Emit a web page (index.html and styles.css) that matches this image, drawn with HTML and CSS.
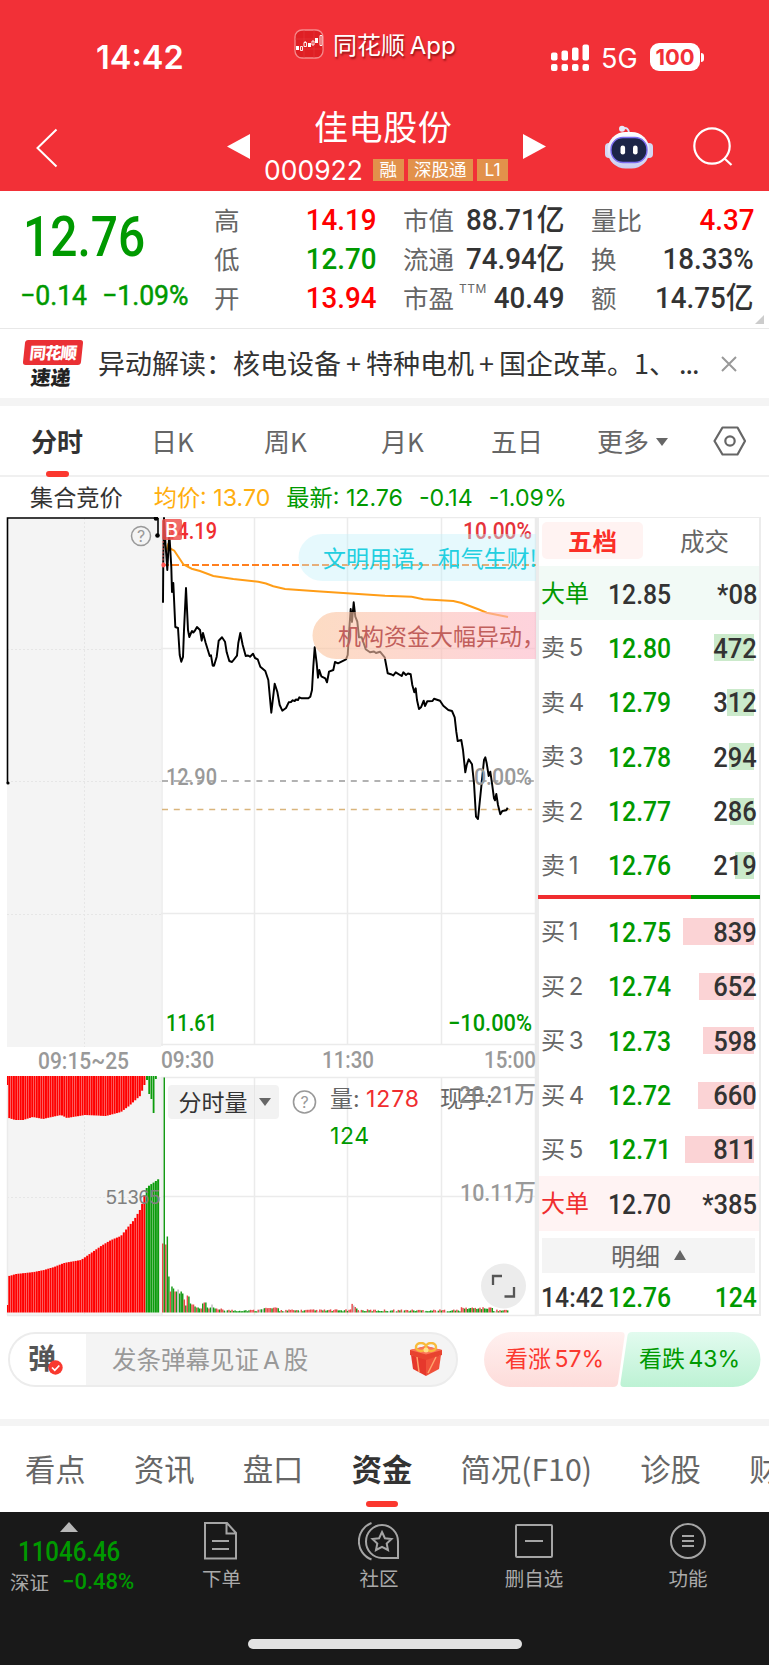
FILE: index.html
```html
<!DOCTYPE html>
<html lang="zh-CN">
<head>
<meta charset="utf-8">
<title>佳电股份 000922</title>
<link rel="stylesheet" href="styles.css">
</head>
<body>
<header class="top">
  <div class="status">
    <span class="clock">14:42</span>
    <span class="app">
      <svg width="30" height="30" viewBox="0 0 30 30"><rect x="1" y="1" width="28" height="28" rx="7" fill="#df1f24" stroke="#f58a8c" stroke-width="1.3"/><path d="M1 10H29M1 20H29M10 1V29M20 1V29" stroke="#e8393d" stroke-width=".6"/><path d="M2 17h3v4H2zM14 14h3v4h-3zM21 9h3v5h-3z" fill="#fff"/><path d="M6.500 17.500h2v4h-2zM10 13.500h2.500v4H10zM18 12h2v4h-2zM26 6.500h2v10h-2zM11.200 12v1.500" fill="none" stroke="#fff" stroke-width=".9"/></svg>
      <span>同花顺 App</span>
    </span>
    <svg class="signal" width="38" height="28" viewBox="0 0 38 28" fill="#fff"><rect x="0" y="8.500" width="6.500" height="8" rx="2"/><rect x="10.500" y="6.500" width="6.500" height="10" rx="2"/><rect x="21" y="3.500" width="6.500" height="13" rx="2"/><rect x="31.500" y="0.500" width="6.500" height="16" rx="2"/><rect x="0" y="20" width="6.500" height="7" rx="2"/><rect x="10.500" y="20" width="6.500" height="7" rx="2"/><rect x="21" y="20" width="6.500" height="7" rx="2"/><rect x="31.500" y="20" width="6.500" height="7" rx="2"/></svg>
    <span class="net">5G</span>
    <span class="battery">100</span><i class="nub"></i>
  </div>
  <nav class="titlebar">
    <svg class="back" width="22" height="40" viewBox="0 0 22 40"><path d="M20.500 1.500L1.500 20L20.500 38.500" fill="none" stroke="#fff" stroke-width="2"/></svg>
    <svg class="prev" width="23" height="25" viewBox="0 0 23 25"><path d="M0 12.500L23 0V25z" fill="#fff"/></svg>
    <div class="stock">
      <h1>佳电股份</h1>
      <div class="codes"><span class="code">000922</span><b>融</b><b>深股通</b><b>L1</b></div>
    </div>
    <svg class="next" width="23" height="25" viewBox="0 0 23 25"><path d="M23 12.500L0 0V25z" fill="#fff"/></svg>
    <svg class="robot" width="48" height="44" viewBox="0 0 48 44">
      <defs><linearGradient id="rb" x1="0" y1="0" x2="0" y2="1"><stop offset="0" stop-color="#fff"/><stop offset="1" stop-color="#c9cdf0"/></linearGradient></defs>
      <path d="M17 3.500q7-2 7 5" fill="none" stroke="#dfe1f6" stroke-width="2"/><circle cx="17" cy="3.800" r="3" fill="#e6e7f8"/>
      <rect x="0" y="18" width="8" height="15" rx="4" fill="#d4d7f2"/><rect x="40" y="18" width="8" height="15" rx="4" fill="#d4d7f2"/>
      <rect x="2.500" y="7" width="42" height="36.500" rx="18" fill="url(#rb)"/>
      <rect x="6" y="12.500" width="36" height="25" rx="12" fill="#1c2547" stroke="#7b6df0" stroke-width="1.400"/>
      <rect x="15.500" y="20.500" width="4.600" height="9" rx="2.300" fill="#fff"/><rect x="28" y="20.500" width="4.600" height="9" rx="2.300" fill="#fff"/>
    </svg>
    <svg class="search" width="40" height="40" viewBox="0 0 40 40" fill="none" stroke="#fff" stroke-width="2.200"><circle cx="19" cy="19" r="17.700"/><path d="M31 31L38.500 38"/></svg>
  </nav>
</header>

<section class="quote">
  <div class="last"><div class="din price">12.76</div><div class="chg"><span class="din">−0.14</span><span class="din">−1.09%</span></div></div>
  <div class="stats">
    <span>高</span><b class="din up">14.19</b><span>市值</span><b class="din">88.71亿</b><span>量比</span><b class="din up">4.37</b>
    <span>低</span><b class="din down">12.70</b><span>流通</span><b class="din">74.94亿</b><span>换</span><b class="din">18.33%</b>
    <span>开</span><b class="din up">13.94</b><span class="pe">市盈<sup>TTM</sup></span><b class="din">40.49</b><span>额</span><b class="din">14.75亿</b>
  </div>
  <i class="corner"></i>
</section>

<section class="news">
  <div class="flash"><span class="flash-top">同花顺</span><span class="flash-bot">速递</span></div>
  <p><span>异动解读：</span><span>核电设备<i>+</i>特种电机<i>+</i>国企改革。1、<span class="dots">...</span></span></p>
  <svg width="16" height="16" viewBox="0 0 16 16"><path d="M1 1L15 15M15 1L1 15" stroke="#999" stroke-width="2"/></svg>
</section>

<nav class="periods">
  <span class="on">分时</span><span>日K</span><span>周K</span><span>月K</span><span>五日</span><span class="more">更多<i></i></span>
  <svg width="34" height="30" viewBox="0 0 34 30" fill="none" stroke="#666" stroke-width="2.200"><path d="M9.500 1.500H24.500L32 15L24.500 28.500H9.500L1.500 15z" stroke-linejoin="round"/><circle cx="17" cy="15" r="4.700"/></svg>
</nav>

<div class="legend"><span>集合竞价</span><span class="avg">均价: 13.70</span><span class="now">最新: 12.76</span><span class="now">-0.14</span><span class="now">-1.09%</span></div>

<main class="board">
  <svg class="chart" width="537" height="800" viewBox="0 517 537 800">
    <defs>
      <linearGradient id="pk"><stop offset="0" stop-color="#fbc49c"/><stop offset="1" stop-color="#fdb5c6"/></linearGradient>
    </defs>
    <rect x="7" y="517" width="154" height="530" fill="#f4f4f4"/>
    <rect x="7" y="1077" width="154" height="238" fill="#f4f4f4"/>
    <g stroke="#e6e6e6" stroke-dasharray="2 2"><path d="M84.500 518V1047M7 649.500H161M7 781.500H161M7 914.500H161M84.500 1077V1314M7 1197.500H161"/></g>
    <g stroke="#ebebeb" stroke-width="1.500" fill="none"><path d="M162 517V1046M162 1077V1315M254.500 517V1045M347.500 517V1045M441.500 517V1045M254.500 1077V1315M347.500 1077V1315M441.500 1077V1315M161 517.500H537M161 648.500H537M161 913.500H537M161 1044.500H537M161 1077.500H537M161 1196.500H537M7 1315.500H537M7.500 1077V1315"/><path d="M536 517V1315" stroke-width="2.500"/></g>
    <g stroke-width="1.700" fill="none">
      <path d="M162 565H536" stroke="#ff7f1e" stroke-width="2" stroke-dasharray="7 3"/>
      <path d="M162 781H536" stroke="#999" stroke-dasharray="6 5.800"/>
      <path d="M162 809.500H532" stroke="#d9b57c" stroke-width="1.300" stroke-dasharray="6 5.800"/>
      <path d="M166 552L168 545L171 549L174.300 550.700L178.300 556.700L183.300 564.300L191.700 568.700L200 571L213.300 576L233.300 579L258.300 581.700L266 583.500L273.300 586.300L285 589L316.700 591.300L385 595.700L411.700 596.700L423.300 599.300L453.300 601L461.700 603L478.300 609.300L486.700 612.700L508 617" stroke="#ff9d17" stroke-width="2"/>
      <path class="trend" d="M163 602.700L163.300 560L164 518L165.500 544L167.300 570L169.300 533L171.300 567L172 592L173.300 583L175.300 627L178 628L179.700 655L181.300 661.700L183 657L184 630L186 588L188 630L189.300 637L191 633L192 631L193.300 632.500L195 630.500L197 627L200 630L201.700 640.700L203 633L205.700 643L209.700 656L211 655.300L212.700 665.700L214 665.700L216.700 656.700L218.700 640.700L222 637.300L225 641.700L226.700 652.300L229.300 661L232 662L237 655.700L238.300 643L240.300 633L242.700 645L245.700 656L248 655.500L250 656.700L253 653.700L255 658L257.700 659.300L260.300 666.700L265.300 671L268.300 680L271.300 712.700L274.700 683.700L277.300 691.700L279.700 705L282.300 710.700L286 708L288.700 702.300L291 702L292.700 700.300L294.700 701L296 699.500L298 700L299.300 697.300L301.700 698.300H308.300L310.300 696.700L312 690L313.300 666.700L314.700 647.300L316.700 663.300L318 677.700L319.300 670L321.300 676.300L325.300 678.300L327 682.300L329 671.700L333.300 670L335 662L338 663.300L346 659.300L347.700 655L349 633L350.700 609L352 622L353.700 602.300L355.300 616.700L357.300 621.700L359 637.300H361.700L365.700 649.300L370 652.300L374 651.500L376 653L380 651.700L384.700 657.300L387.700 673.300L391.700 674.500L393.300 675.500L395.700 672.300L401.700 676L403.300 672.300L406 675L408 673.500L410.700 674.300L412.300 685L414.300 692.300L415.700 688.300L417 700L419 709L421 707.300L423.700 700.700L425 706L427.300 701.300L432.500 701L434 698.700L440 700.700L443.300 705.700L448.300 710L452 711L454.700 717.300L456.300 731.700L457.700 741L461.300 740L463 750L465.300 772.300L466.700 765L468.700 759.300L472 764.300L474 783.300L476 816.700L478 819L481.300 786.700L484 760L485.300 757.300L486.700 763.300L488.700 776L490.300 771.700L492 783.300L494 798.300L495 800.300L496.300 794L498 805L500.300 814.300L502.300 811L506.300 810.300L507.700 807.700" stroke="#000" stroke-width="1.950" stroke-linejoin="round"/>
      <path d="M7.500 783V518H156M158 518V535" stroke="#000" stroke-width="1.600"/>
    </g>
    <circle cx="8" cy="783" r="1.600"/><circle cx="157.500" cy="535.500" r="2.300"/><circle cx="156" cy="518.500" r="2.300"/>
    <circle cx="141" cy="536" r="9.500" fill="none" stroke="#999" stroke-width="1.500"/><text x="141" y="542" class="q" text-anchor="middle">?</text>
    <text class="ax" x="166" y="539" fill="#f02d2f" textLength="51" lengthAdjust="spacingAndGlyphs">14.19</text>
    <rect x="162" y="519" width="20" height="21" rx="2" fill="#ef5350" opacity=".85"/><text x="165" y="537" class="bmark">B</text>
    <path d="M163 541V569" stroke="#f66" stroke-dasharray="2 1.500"/><circle cx="163.500" cy="565" r="2.200" fill="#f55"/>
    <text class="ax" x="463" y="539" fill="#e5333b" textLength="69" lengthAdjust="spacingAndGlyphs">10.00%</text>
    <text class="ax" x="166" y="784.500" fill="#999" textLength="51" lengthAdjust="spacingAndGlyphs">12.90</text>
    <text class="ax" x="474" y="784.500" fill="#999" textLength="58" lengthAdjust="spacingAndGlyphs">0.00%</text>
    <text class="ax" x="166" y="1030.500" fill="#090" textLength="51" lengthAdjust="spacingAndGlyphs">11.61</text>
    <text class="ax" x="448" y="1030.500" fill="#090" textLength="84" lengthAdjust="spacingAndGlyphs">−10.00%</text>
    <g fill="#999">
      <text class="ax" x="38" y="1069" textLength="91" lengthAdjust="spacingAndGlyphs">09:15~25</text>
      <text class="ax" x="161" y="1067.500" textLength="53" lengthAdjust="spacingAndGlyphs">09:30</text>
      <text class="ax" x="322" y="1067.500" textLength="52" lengthAdjust="spacingAndGlyphs">11:30</text>
      <text class="ax" x="484" y="1067.500" textLength="52" lengthAdjust="spacingAndGlyphs">15:00</text>
    </g>
    <path d="M536 534H322a23.500 23.500 0 0 0 0 47H536z" fill="#c3f1fa" opacity=".42"/>
    <text class="dm" x="323" y="566.500" fill="#22cfe0" textLength="214">文明用语，和气生财!</text>
    <path d="M536 612H336a23.500 23.500 0 0 0 0 47H536z" fill="url(#pk)" opacity=".6"/>
    <text class="dm" x="338" y="644.500" fill="#c15f5c">机构资金大幅异动，</text>
    <rect x="168" y="1085" width="111" height="34" rx="4" fill="#f2f2f2"/>
    <path d="M254.500 1085V1119" stroke="#e6e6e6"/>
    <g id="volume"></g>
    <text x="106" y="1204" class="num5">51365</text>
    <text class="dm" x="178.500" y="1111" fill="#333">分时量</text><path d="M259 1098H271L265 1106z" fill="#666"/>
    <circle cx="304.500" cy="1102" r="11" fill="none" stroke="#999" stroke-width="1.600"/><text x="304.500" y="1108" class="q" text-anchor="middle">?</text>
    <text class="vl" x="330" y="1107" fill="#666">量:</text><text class="vl" x="366" y="1107" fill="#f02d2f" textLength="53">1278</text>
    <text class="vl" x="440" y="1107" fill="#666">现手:</text><text class="vl" x="330" y="1143.500" fill="#090" textLength="39">124</text>
    <text class="ax" x="459" y="1103" fill="#888" textLength="77" lengthAdjust="spacingAndGlyphs">20.21万</text>
    <text class="ax" x="460" y="1201" fill="#999" textLength="76" lengthAdjust="spacingAndGlyphs">10.11万</text>
    <circle cx="503.500" cy="1286" r="22.500" fill="#ececec"/><path d="M493 1285V1276H502M514 1287V1296.500H504.500" fill="none" stroke="#555" stroke-width="2.300"/>
  </svg>

  <aside class="book">
    <div class="book-tabs"><span class="on">五档</span><span>成交</span></div>
    <div class="lvl big sell"><span>大单</span><b class="din">12.85</b><em class="din">*08</em></div>
    <div class="lvl"><span>卖 5</span><b class="din">12.80</b><i style="width:40px"></i><em class="din">472</em></div>
    <div class="lvl"><span>卖 4</span><b class="din">12.79</b><i style="width:27px"></i><em class="din">312</em></div>
    <div class="lvl"><span>卖 3</span><b class="din">12.78</b><i style="width:25px"></i><em class="din">294</em></div>
    <div class="lvl"><span>卖 2</span><b class="din">12.77</b><i style="width:24px"></i><em class="din">286</em></div>
    <div class="lvl"><span>卖 1</span><b class="din">12.76</b><i style="width:19px"></i><em class="din">219</em></div>
    <div class="ratio"><i></i></div>
    <div class="lvl buy"><span>买 1</span><b class="din">12.75</b><i style="width:71px"></i><em class="din">839</em></div>
    <div class="lvl buy"><span>买 2</span><b class="din">12.74</b><i style="width:55px"></i><em class="din">652</em></div>
    <div class="lvl buy"><span>买 3</span><b class="din">12.73</b><i style="width:51px"></i><em class="din">598</em></div>
    <div class="lvl buy"><span>买 4</span><b class="din">12.72</b><i style="width:56px"></i><em class="din">660</em></div>
    <div class="lvl buy"><span>买 5</span><b class="din">12.71</b><i style="width:69px"></i><em class="din">811</em></div>
    <div class="lvl big purchase"><span>大单</span><b class="din">12.70</b><em class="din">*385</em></div>
    <div class="detail">明细<i></i></div>
    <div class="tick"><span class="din">14:42</span><b class="din">12.76</b><em class="din">124</em></div>
  </aside>
</main>

<section class="danmu">
  <div class="input">
    <div class="toggle"><b>弹</b><svg width="15" height="15" viewBox="0 0 15 15"><circle cx="7.500" cy="7.500" r="7.200" fill="#f9392f"/><path d="M4 7.500L6.800 10.300L11.300 5.500" fill="none" stroke="#fff" stroke-width="1.700"/></svg></div>
    <span>发条弹幕见证 A 股</span>
    <svg class="gift" width="34" height="34" viewBox="0 0 34 34"><path d="M2 13L17 17V34L4 27z" fill="#e6382c"/><path d="M32 13L17 17V34L30 27z" fill="#f0503a"/><path d="M1 8L17 4L33 8V13L17 18L1 13z" fill="#e8432f"/><path d="M1 8L17 12.500L33 8L17 4z" fill="#fb7657"/><path d="M8 15L10 30M27 15L19 31" stroke="#ffa36c" stroke-width="1.500"/><g fill="none" stroke="#f8bb3b" stroke-width="2.500"><ellipse cx="12" cy="5" rx="5" ry="4"/><ellipse cx="22" cy="5" rx="5" ry="4"/></g><circle cx="17" cy="8" r="2.500" fill="#ffe18a"/></svg>
  </div>
  <div class="vote">
    <svg width="277" height="55" viewBox="0 0 277 55"><defs><linearGradient id="vr" x2="0" y2="1"><stop stop-color="#fff0ef"/><stop offset="1" stop-color="#fddcda"/></linearGradient><linearGradient id="vg" x2="0" y2="1"><stop stop-color="#e2fbef"/><stop offset="1" stop-color="#bdf2d4"/></linearGradient></defs><path d="M27.500 0H137q4 0 3.600 4L134 51q-.6 4-5 4H27.500a27.500 27.500 0 0 1 0-55z" fill="url(#vr)"/><path d="M249 0H148q-4 0-4.600 4L136.500 51q-.6 4 3.500 4H249a27.500 27.500 0 0 0 0-55z" fill="url(#vg)"/></svg>
    <span class="bull">看涨 57%</span><span class="bear">看跌 43%</span>
  </div>
</section>

<nav class="sections"><span>看点</span><span>资讯</span><span>盘口</span><span class="on">资金</span><span>简况(F10)</span><span>诊股</span><span>财务</span></nav>

<footer class="dock">
  <div class="index"><i></i><span class="din idx">11046.46</span><div><span>深证</span><span class="din pct">−0.48%</span></div></div>
  <div class="item"><svg width="40" height="40" viewBox="0 0 40 40"><path d="M3 2H25L34 12V37.500H3zM24.500 2V12.500H34M10 20H27M10 28H27"/></svg>下单</div>
  <div class="item"><svg width="42" height="40" viewBox="0 0 42 40"><path d="M40 37V20.500A16 16.500 0 1 0 24 37z"/><path d="M13.500 2A19.500 19.500 0 0 0 13.500 38.500"/><path d="M24 11L26.900 17.200L33.500 18L28.700 22.500L30 29L24 25.800L18 29L19.300 22.500L14.500 18L21.100 17.200z"/></svg>社区</div>
  <div class="item"><svg width="40" height="40" viewBox="0 0 40 40"><rect x="2" y="4" width="36" height="32" rx="1"/><path d="M11 20H29"/></svg>删自选</div>
  <div class="item"><svg width="40" height="40" viewBox="0 0 40 40"><circle cx="20" cy="20" r="17"/><path d="M14 15H26M14 20H26M14 25H26"/></svg>功能</div>
  <i class="home"></i>
</footer>
<script src="chart.js"></script>
</body>
</html>
```

FILE: styles.css
```css
* { box-sizing: border-box; }
body { margin: 0; width: 769px; height: 1665px; overflow: hidden; background: #fff; color: #333; font-family: Inter, "Noto Sans CJK SC", sans-serif; }
i, em { font-style: normal; }
svg { display: block; flex: none; }
.din { display: inline-block; font-family: Roboto, "Noto Sans CJK SC", sans-serif; font-weight: 500; transform: scaleX(.9); transform-origin: left center; white-space: nowrap; }
.up { color: #f00; }
.down { color: #090; }

/* header */
.top { height: 191px; background: #f23037; color: #fff; }
.status { height: 96px; display: flex; align-items: flex-start; }
.clock { margin: 41px 0 0 96px; width: 198px; font-size: 32.500px; line-height: 34px; font-weight: 600; }
.app { display: flex; gap: 9px; margin-top: 29px; width: 256px; font: 24px/31px Inter, "Noto Sans CJK SC", sans-serif; text-shadow: 1px 2px 2px rgba(80, 0, 0, .6); white-space: nowrap; word-spacing: -2px; }
.app span { position: relative; top: 1px; }
.signal { margin: 44px 0 0 1px; }
.net { margin: 43px 0 0 12px; width: 49px; font-size: 27px; line-height: 32px; }
.battery { margin-top: 43px; width: 50px; height: 28px; border-radius: 9px; background: #fff; color: #f23037; font-size: 22px; line-height: 28px; font-weight: 700; text-align: center; }
.nub { width: 3px; height: 9px; margin: 53px 0 0 1px; border-radius: 0 4px 4px 0; background: #fff; }
.titlebar { height: 95px; display: flex; align-items: flex-start; }
.back { margin: 32px 0 0 36px; }
.prev { margin: 38px 0 0 169px; }
.stock { width: 257px; margin: 5px 0 0 14px; }
.stock h1 { margin: 0 0 0 50px; font: 400 34px/50px "Noto Sans CJK SC", sans-serif; letter-spacing: .6px; }
.codes { display: flex; gap: 4px; align-items: center; height: 38px; }
.code { width: 105px; font-size: 26.500px; }
.codes b { height: 22px; padding: 0 6.500px; background: #e2914b; font: 400 17.500px/21px Inter, "Noto Sans CJK SC", sans-serif; white-space: nowrap; }
.codes b:last-child { padding: 0 7.500px; }
.next { margin: 38px 0 0 2px; }
.robot { margin: 29px 0 0 59px; }
.search { margin: 31px 0 0 40px; }

/* quote */
.quote { position: relative; height: 138px; display: flex; border-bottom: 1px solid #e8e8e8; }
.last { width: 214px; color: #090; }
.price { margin: 13px 0 0 23px; font-size: 55px; line-height: 66px; transform: scaleX(.87); display: block; }
.chg { display: flex; margin: 7px 0 0 20px; font-size: 28px; line-height: 38px; }
.chg .din { width: 82px; font-weight: 400; -webkit-text-stroke: .5px; transform: scaleX(.95); }
.stats { display: grid; grid-template-columns: 50px 113px 89px 99px 88px 101px; grid-auto-rows: 39px; padding-top: 8px; }
.stats span { font: 400 25.500px/39px "Noto Sans CJK SC", sans-serif; color: #666; white-space: nowrap; }
.stats b { justify-self: end; font-size: 30px; line-height: 41px; transform: scaleX(.925); transform-origin: right center; }
.stats span:nth-child(6n+3) { padding-left: 26px; }
.stats span:nth-child(6n+5) { padding-left: 26px; }
.pe { display: flex; }
.pe sup { font: 12px/14px Inter, sans-serif; margin: 5px 0 0 5px; letter-spacing: .5px; }
.corner { position: absolute; right: 5px; bottom: 4px; border-left: 9px solid transparent; border-bottom: 9px solid #ccc; }

/* news */
.news { height: 77px; display: flex; align-items: center; border-bottom: 8px solid #f4f4f4; padding-left: 24px; }
.flash { width: 58px; margin-right: 16px; display: flex; flex-direction: column; font: 900 18px/24px "Noto Sans CJK SC", sans-serif; }
.flash-top { height: 25px; border-radius: 3px; background: #ea3034; color: #fff; text-align: center; letter-spacing: -1px; transform: skewX(-6deg); font-size: 16.500px; }
.flash-bot { color: #222; text-align: center; transform: skewX(-6deg); font-size: 20px; line-height: 23px; padding-right: 4px; }
.news p { width: 623px; margin: -2px 0 0; font: 27px/40px "Noto Sans CJK SC", sans-serif; white-space: nowrap; }
.news p i { display: inline-block; width: 25px; text-align: center; }
.dots { margin-left: 3px; letter-spacing: -1px; }

/* periods */
.periods { height: 71px; display: flex; align-items: center; border-bottom: 2px solid #f0f0f0; padding-left: 31px; font: 26px/69px "Noto Sans CJK SC", sans-serif; color: #666; white-space: nowrap; }
.periods span { width: 116px; }
.periods span:nth-child(1) { width: 120px; }
.periods span:nth-child(2) { width: 113px; }
.periods span:nth-child(3) { width: 117px; }
.periods span:nth-child(4) { width: 110px; }
.periods span:nth-child(5) { width: 106px; }
.periods .on, .sections .on { position: relative; color: #333; font-weight: 700; }
.periods .on::after { content: ""; position: absolute; left: 15px; bottom: -2px; width: 23px; height: 6px; border-radius: 3px; background: #fb382f; }
.more i { display: inline-block; margin-left: 7px; vertical-align: 6px; border: 6.500px solid transparent; border-top: 8px solid #666; border-bottom: 0; }

.legend { height: 40px; display: flex; align-items: center; padding: 2px 0 0 30px; font-size: 23.200px; line-height: 38px; white-space: nowrap; }
.legend span { margin-right: 16px; }
.legend span:first-child { margin-right: 31px; }
.avg { color: #ffae0f; }
.now { color: #090; }

/* chart and order book */
.board { display: flex; height: 800px; }
.ax { font: 500 23.500px Roboto, "Noto Sans CJK SC", sans-serif; }
.q { font: 16px Inter, sans-serif; fill: #999; }
.bmark { font: 500 20px Inter, sans-serif; fill: #fff; }
.dm { font: 23px "Noto Sans CJK SC", sans-serif; }
.vl { font: 23px Inter, "Noto Sans CJK SC", sans-serif; }
.num5 { font: 19.500px "Liberation Sans", sans-serif; fill: #808080; }
.book { width: 224px; height: 799px; border: 2px solid #ececec; border-width: 1px 2px 2px; }
.book-tabs { height: 48px; display: flex; padding: 4px 0 0 3px; font: 24.500px/37px "Noto Sans CJK SC", sans-serif; color: #666; }
.book-tabs span { width: 101px; height: 37px; text-align: center; }
.book-tabs .on { background: #fff3f2; border-radius: 5px; color: #fb2f27; font-weight: 700; margin-right: 11px; }
.lvl { position: relative; height: 54.400px; display: grid; grid-template-columns: 67px 1fr auto; align-items: center; padding: 1px 2px 0; }
.lvl span { font: 24px/54px Inter, "Noto Sans CJK SC", sans-serif; color: #666; white-space: nowrap; word-spacing: -3px; }
.lvl .din, .tick .din { font-size: 27.500px; line-height: 53px; }
.lvl em.din { transform: scaleX(.93); }
.lvl b { color: #090; }
.lvl em, .tick em { position: relative; transform-origin: right center; }
.lvl i { position: absolute; right: 5px; top: 14px; height: 27px; background: #cbeacb; }
.buy i { background: #fbd3d5; }
.big b { color: #333; }
.sell { background: #f2faf6; }
.sell span { color: #090; }
.purchase { background: #fff3f3; }
.purchase span { color: #f02d2f; }
.ratio { height: 12px; padding-top: 3px; margin: 0 -1px; }
.ratio i { display: block; height: 4px; background: linear-gradient(90deg, #f02d2f 69%, #090 69%); }
.detail { height: 35px; margin: 7px 4px 0 3px; background: #f4f4f4; display: flex; align-items: center; justify-content: center; gap: 14px; font: 24.500px/33px "Noto Sans CJK SC", sans-serif; color: #666; }
.detail i { border: 6.500px solid transparent; border-bottom: 10px solid #666; border-top: 0; }
.tick { display: grid; grid-template-columns: 67px 1fr auto; padding: 0 2px; }
.tick .din { line-height: 50px; }
.tick b, .tick em { color: #090; }

/* comment box */
.danmu { height: 109px; padding: 15px 8px 0; display: flex; justify-content: space-between; border-bottom: 7px solid #f4f4f4; }
.input { width: 450px; height: 55px; display: flex; align-items: center; border: 2px solid #ececec; border-radius: 28px; background: #f4f4f4; overflow: hidden; font: 24.500px/51px Inter, "Noto Sans CJK SC", sans-serif; color: #999; white-space: nowrap; word-spacing: -3px; }
.input > span { width: 297px; padding-top: 2px; }
.toggle { position: relative; width: 76px; height: 51px; margin-right: 26px; padding-left: 18px; background: #fff; color: #555; font: 28px/46px "Noto Sans CJK SC", sans-serif; }
.toggle svg { position: absolute; left: 38px; top: 26px; }
.gift { margin-top: -2px; }
.vote { position: relative; height: 55px; font: 23px/55px Inter, "Noto Sans CJK SC", sans-serif; white-space: nowrap; word-spacing: -3px; }
.vote span { position: absolute; top: 0; }
.bull { left: 21px; color: #fb382f; }
.bear { left: 155px; color: #090; }

/* section tabs */
.sections { height: 86px; display: flex; gap: 48.300px; padding-left: 25px; font: 30.300px/84px "Noto Sans CJK SC", sans-serif; color: #666; white-space: nowrap; overflow: hidden; }
.sections .on::after { content: ""; position: absolute; left: 14px; top: 75px; width: 32px; height: 6px; border-radius: 3px; background: #fb382f; }

/* dock */
.dock { position: relative; height: 153px; background: #191919; display: flex; color: #aaa; font: 19.500px/28px "Noto Sans CJK SC", sans-serif; }
.index { width: 142px; padding: 10px 0 0 10px; display: flex; flex-direction: column; }
.index > i { margin-left: 50px; width: 0; border: 9px solid transparent; border-bottom: 10px solid #b8b8b8; border-top: 0; }
.idx { align-self: flex-start; margin: 6px 0 0 8px; color: #090; font-size: 27px; line-height: 28px; transform: scaleX(.89); }
.index > div { display: flex; gap: 13px; line-height: 30px; margin-top: 1px; }
.pct.din { color: #090; font-size: 22px; transform: none; }
.item { width: 156px; display: flex; flex-direction: column; align-items: center; padding-top: 9px; }
.item:nth-child(2) { width: 159px; }
.item:nth-child(n+4) { width: 154px; }
.item svg { fill: none; stroke: #a5a5a5; stroke-width: 2; margin-bottom: 3px; }
.home { position: absolute; left: 248px; bottom: 16px; width: 274px; height: 10px; border-radius: 5px; background: #e2e2e2; }
```

FILE: chart.js
```js
// Volume bars: auction session on the left, continuous session on the right.
(function () {
  var RED = '#f00', GREEN = '#0d9c0d', out = '';
  function bar(x, y, w, h, c) {
    out += '<rect x="' + x.toFixed(2) + '" y="' + y.toFixed(1) + '" width="' + w + '" height="' + h.toFixed(1) + '" fill="' + c + '"/>';
  }
  function at(points, x) {
    for (var i = 1; i < points.length; i++) {
      if (x <= points[i][0]) {
        var a = points[i - 1], b = points[i];
        return a[1] + (b[1] - a[1]) * (x - a[0]) / (b[0] - a[0]);
      }
    }
    return points[points.length - 1][1];
  }
  var matched = [[8, 1276], [15, 1274], [33, 1272], [43, 1270], [53, 1267], [63, 1263], [80, 1260], [90, 1253], [100, 1246], [110, 1240], [120, 1236], [127, 1227], [133, 1220], [140, 1208], [143, 1197], [146, 1187], [152, 1183], [159, 1178]];
  var unmatched = [[8, 1118], [14, 1120], [22, 1120], [32, 1117], [42, 1119], [60, 1115], [66, 1118], [84, 1115], [105, 1116], [120, 1112], [128, 1106], [139, 1096], [145, 1081], [147, 1077]];
  bar(7, 1305, 1.3, 7.5, RED);
  bar(7, 1076, 1.3, 9, RED);
  for (var x = 8.3; x < 158; x += 2.29) {
    var top = at(matched, x);
    bar(x, top, 2.02, 1312.5 - top, x < 145 ? RED : GREEN);
    if (x < 145) bar(x, 1076, 2.02, at(unmatched, x) - 1076, RED);
  }
  bar(146, 1076, 2, 4, GREEN);
  bar(148.3, 1076, 1.8, 18, GREEN);
  bar(150.5, 1076, 1.8, 23, GREEN);
  bar(152.700, 1076, 1.8, 37, GREEN);
  bar(155, 1076, 1.8, 3, GREEN);

  var R = '#e84a4a', G = '#149914';
  var opening = [[69, R], [235, G], [68, R], [76, G], [36, G], [21, R], [26, G], [24, G], [21, R], [21, G], [23, '#bbb'], [19, G], [21, G], [19, G], [13, R], [7, G], [17, R], [16, G], [9, G], [8, R], [8, R], [6, G], [5, R], [5, G], [4, G], [4, R], [9, G], [10, R], [10, G], [5, G], [4, R], [5, G], [8, '#bbb'], [5, G], [4, G], [4, R], [3, R], [3, G], [4, R], [3, R]];
  for (var i = 0; i < 225; i++) {
    var px = 162 + i * 1.54, h, c;
    if (i < opening.length) { h = opening[i][0]; c = opening[i][1]; }
    else {
      var n = Math.abs(Math.sin(i * 12.9898) * 43758.5453) % 1;
      h = 1 + n * 2.2;
      if (px > 258 && px < 278) h += 2;
      if (px > 460 && px < 492) h += 2.2;
      if (px > 350 && px < 358) h = 10 - (px - 350);
      c = (px > 350 && px < 352.5) || n > 0.6 ? R : (n < 0.08 ? '#bbb' : G);
    }
    bar(px, 1312.5 - h, 1.45, h, c);
  }
  document.getElementById('volume').innerHTML = out;
})();
```
